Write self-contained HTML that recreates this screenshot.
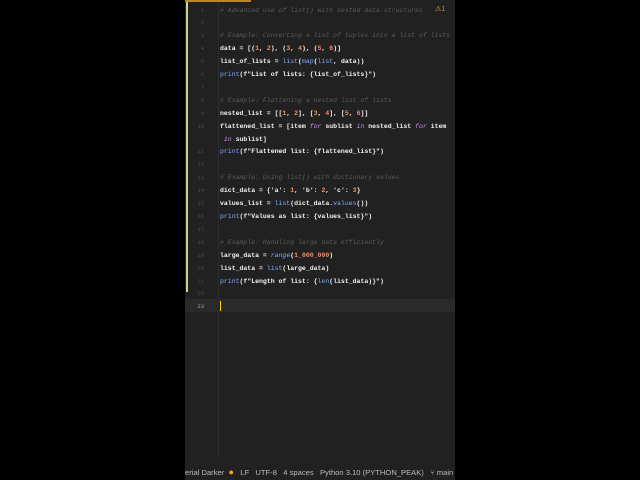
<!DOCTYPE html><html><head><style>
body{margin:0;width:640px;height:480px;background:#000;overflow:hidden;position:relative;font-family:"Liberation Mono",monospace}
#ed{position:absolute;left:185px;top:0;width:270px;height:480px;background:#212121}
.code{position:absolute;left:220px;top:4.5px;font-size:6.5px;line-height:12.9px;color:#f2f2f2;white-space:pre;font-weight:bold}
.nums{position:absolute;left:185px;top:4.5px;width:19px;text-align:right;font-size:5.5px;line-height:12.9px;color:#4a4a4a;white-space:pre}
.c{color:#5a5a5a;font-style:italic;font-weight:normal}.n{color:#f78c6c}.f{color:#82aaff;font-weight:normal}.k{color:#c792ea;font-style:italic;font-weight:normal}
</style></head><body>
<div id="ed"></div>
<div style="position:absolute;left:185px;top:0;width:66px;height:2px;background:#b8862b"></div>
<div style="position:absolute;left:186px;top:2px;width:2px;height:290px;background:#c6d88a"></div>
<div style="position:absolute;left:218px;top:2px;width:1px;height:455px;background:#2e2e2e"></div>
<div style="position:absolute;left:185px;top:299px;width:270px;height:13px;background:#2a2a2a"></div>
<div style="position:absolute;left:220px;top:301px;width:1px;height:10px;background:#ffcc00"></div>
<div class="nums">1
2
3
4
5
6
7
8
9
10

11
12
13
14
15
16
17
18
19
20
21
22
<span style="color:#aaa">23</span></div>
<div class="code"><span class="c"># Advanced use of list() with nested data structures</span>
 
<span class="c"># Example: Converting a list of tuples into a list of lists</span>
data = [(<span class="n">1</span>, <span class="n">2</span>), (<span class="n">3</span>, <span class="n">4</span>), (<span class="n">5</span>, <span class="n">6</span>)]
list_of_lists = <span class="f">list</span>(<span class="f">map</span>(<span class="f">list</span>, data))
<span class="f">print</span>(f"List of lists: {list_of_lists}")
 
<span class="c"># Example: Flattening a nested list of lists</span>
nested_list = [[<span class="n">1</span>, <span class="n">2</span>], [<span class="n">3</span>, <span class="n">4</span>], [<span class="n">5</span>, <span class="n">6</span>]]
flattened_list = [item <span class="k">for</span> sublist <span class="k">in</span> nested_list <span class="k">for</span> item
 <span class="k">in</span> sublist]
<span class="f">print</span>(f"Flattened list: {flattened_list}")
 
<span class="c"># Example: Using list() with dictionary values</span>
dict_data = {'a': <span class="n">1</span>, 'b': <span class="n">2</span>, 'c': <span class="n">3</span>}
values_list = <span class="f">list</span>(dict_data.<span class="f">values</span>())
<span class="f">print</span>(f"Values as list: {values_list}")
 
<span class="c"># Example: Handling large data efficiently</span>
large_data = <span class="f" style="font-style:italic">range</span>(<span class="n">1_000_000</span>)
list_data = <span class="f">list</span>(large_data)
<span class="f">print</span>(f"Length of list: {<span class="f">len</span>(list_data)}")
</div>
<div style="position:absolute;left:435px;top:5px;font-size:7px;color:#e0b030;font-family:'DejaVu Sans',sans-serif">⚠<span style="color:#888">1</span></div>
<div style="position:absolute;left:185px;top:465px;width:275px;height:14px;font-family:'Liberation Sans',sans-serif;font-size:7.6px;color:#bbb;white-space:pre;line-height:14px;overflow:hidden">erial Darker  <span style="color:#f5a020;font-size:9px">●</span>   LF   UTF-8   4 spaces   Python 3.10 (PYTHON_PEAK)   ⑂ main</div>
</body></html>
